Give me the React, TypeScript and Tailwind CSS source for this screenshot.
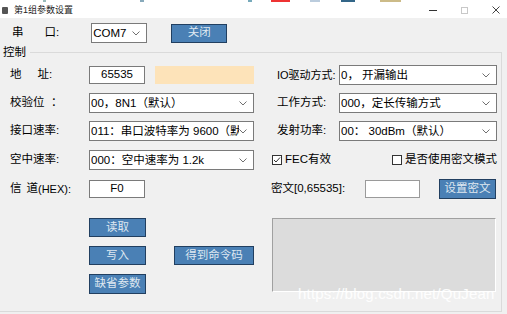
import React from "react";

const Chevron = () => (
  <svg width="8" height="5" viewBox="0 0 8 5" className="shrink-0">
    <path d="M0.5 0.5 L4 4 L7.5 0.5" fill="none" stroke="#707070" strokeWidth="1" />
  </svg>
);

const Select = ({ text, w }: { text: string; w: string }) => (
  <div className={`${w} h-[20px] bg-white border border-[#7a7a7a] flex items-center pl-[1px] pr-[6px] overflow-hidden`}>
    <span className="flex-1 whitespace-nowrap overflow-hidden leading-[18px]">{text}</span>
    <Chevron />
  </div>
);

const Btn = ({ text, w, h = "h-[20px]" }: { text: string; w: string; h?: string }) => (
  <div className={`${w} ${h} bg-[#4a80b5] border border-[#213f60] flex items-center justify-center text-[#dfe8f1] leading-none`}>
    {text}
  </div>
);

const Check = ({ checked }: { checked: boolean }) => (
  <svg width="10" height="10" viewBox="0 0 10 10" className="shrink-0">
    <rect x="0.5" y="0.5" width="9" height="9" fill="white" stroke="#333" strokeWidth="1" />
    {checked && <path d="M2 5 L4 7 L8 2.5" fill="none" stroke="#333" strokeWidth="1" />}
  </svg>
);

export default function App() {
  return (
    <div className="w-[507px] h-[314px] overflow-hidden bg-[#f0f0f0] text-[11.5px] text-black [font-family:'Liberation_Sans','Noto_Sans_CJK_SC',sans-serif] relative">
      {/* top strip */}
      <div className="h-[2px] bg-white flex">
        <div className="ml-[43px] w-[3px] bg-[#9bb]" />
        <div className="ml-[94px] w-[4px] bg-[#8ab]" />
        <div className="ml-[104px] w-[4px] bg-[#7ab]" />
        <div className="ml-[19px] w-[19px] bg-[#e33]" />
        <div className="ml-[20px] w-[10px] bg-[#bcd]" />
        <div className="ml-[21px] w-[14px] bg-[#368]" />
        <div className="ml-[25px] w-[21px] bg-[#cb8]" />
      </div>
      {/* title bar */}
      <div className="h-[16px] bg-white flex items-center">
        <div className="ml-[2px] w-[6px] h-[7px] bg-[#555] rounded-[1px]" />
        <span className="ml-[6px] text-[9px] leading-none text-[#222]">第1组参数设置</span>
        <div className="ml-auto flex items-center">
          <div className="w-[8px] h-[1px] bg-[#333]" />
          <div className="ml-[24px] w-[7px] h-[7px] border border-[#c8c8c8]" />
          <svg width="8" height="8" viewBox="0 0 8 8" className="ml-[24px] mr-[7px]">
            <path d="M0.5 0.5 L7.5 7.5 M7.5 0.5 L0.5 7.5" stroke="#444" strokeWidth="1" />
          </svg>
        </div>
      </div>
      {/* row com */}
      <div className="mt-[5px] h-[20px] flex items-center">
        <span className="ml-[12px]">串</span>
        <span className="ml-[21px]">口:</span>
        <div className="ml-[32px]">
          <Select text="COM7" w="w-[56px]" />
        </div>
        <div className="ml-[24px]">
          <Btn text="关闭" w="w-[56px]" h="h-[19px]" />
        </div>
      </div>
      {/* group */}
      <div className="mt-[9px] w-[502px] h-[260px] border-t border-r border-b border-[#dadada]">
        <div className="-mt-[8px] w-fit bg-[#f0f0f0] pl-[3px] pr-[4px] h-[15px] leading-[15px]">控制</div>

        {/* row 1 */}
        <div className="mt-[5px] h-[20px] flex items-center">
          <div className="w-[272px] flex items-center shrink-0">
            <div className="w-[89px] pl-[10px] flex">
              <span>地</span>
              <span className="ml-[16px]">址:</span>
            </div>
            <div className="w-[56px] h-[18px] bg-white border border-[#7a7a7a] flex items-center justify-center">65535</div>
            <div className="ml-[10px] w-[99px] h-[18px] bg-[#fde3b9]" />
          </div>
          <div className="w-[67px] pl-[5px] whitespace-nowrap text-[11px]">IO驱动方式:</div>
          <Select text="0， 开漏输出" w="w-[158px]" />
        </div>

        {/* row 2 */}
        <div className="mt-[8px] h-[20px] flex items-center">
          <div className="w-[272px] flex items-center shrink-0">
            <div className="w-[89px] pl-[10px] whitespace-pre">校验位  ：</div>
            <Select text="00，8N1（默认）" w="w-[165px]" />
          </div>
          <div className="w-[67px] pl-[5px] whitespace-nowrap">工作方式:</div>
          <Select text="000，定长传输方式" w="w-[158px]" />
        </div>

        {/* row 3 */}
        <div className="mt-[8px] h-[20px] flex items-center">
          <div className="w-[272px] flex items-center shrink-0">
            <div className="w-[89px] pl-[10px] whitespace-nowrap">接口速率:</div>
            <Select text="011：串口波特率为 9600（默认" w="w-[165px]" />
          </div>
          <div className="w-[67px] pl-[5px] whitespace-nowrap">发射功率:</div>
          <Select text="00： 30dBm（默认）" w="w-[158px]" />
        </div>

        {/* row 4 */}
        <div className="mt-[9px] h-[20px] flex items-center">
          <div className="w-[272px] flex items-center shrink-0">
            <div className="w-[89px] pl-[10px] whitespace-nowrap">空中速率:</div>
            <Select text="000：空中速率为 1.2k" w="w-[165px]" />
          </div>
          <div className="w-[120px] flex items-center">
            <Check checked />
            <span className="ml-[3px]">FEC有效</span>
          </div>
          <div className="flex items-center whitespace-nowrap">
            <Check checked={false} />
            <span className="ml-[3px]">是否使用密文模式</span>
          </div>
        </div>

        {/* row 5 */}
        <div className="mt-[9px] h-[20px] flex items-center">
          <div className="w-[272px] flex items-center shrink-0">
            <div className="w-[89px] pl-[10px] whitespace-nowrap flex items-center">
              <span>信</span>
              <span className="ml-[5px]">道</span>
              <span className="text-[11px]">(HEX):</span>
            </div>
            <div className="w-[56px] h-[18px] bg-white border border-[#7a7a7a] flex items-center justify-center">F0</div>
          </div>
          <div className="w-[94px] -ml-[1px] whitespace-nowrap">密文[0,65535]:</div>
          <div className="w-[55px] h-[18px] bg-white border border-[#9a9a9a]" />
          <div className="ml-[19px]">
            <Btn text="设置密文" w="w-[57px]" />
          </div>
        </div>

        {/* bottom */}
        <div className="mt-[19px] flex">
          <div className="w-[272px] shrink-0 pl-[89px] grid grid-cols-[57px_80px] gap-x-[28px] grid-rows-[19px_19px_20px] gap-y-[9px] content-start">
            <Btn text="读取" w="w-[57px]" h="h-[19px]" />
            <div />
            <Btn text="写入" w="w-[57px]" h="h-[19px]" />
            <Btn text="得到命令码" w="w-[80px]" h="h-[19px]" />
            <Btn text="缺省参数" w="w-[57px]" h="h-[20px]" />
            <div />
          </div>
          <div className="w-[224px] h-[74px] bg-[#dcdcdc] border-t border-l border-[#a0a0a0] border-r border-b border-r-white border-b-white" />
        </div>
      </div>
      {/* watermark */}
      <div className="absolute left-[298px] top-[285px] text-[15px] leading-[18px] tracking-[0.2px] text-white/90 [font-family:'Liberation_Sans',sans-serif]">
        https://blog.csdn.net/QuJean
      </div>
    </div>
  );
}
